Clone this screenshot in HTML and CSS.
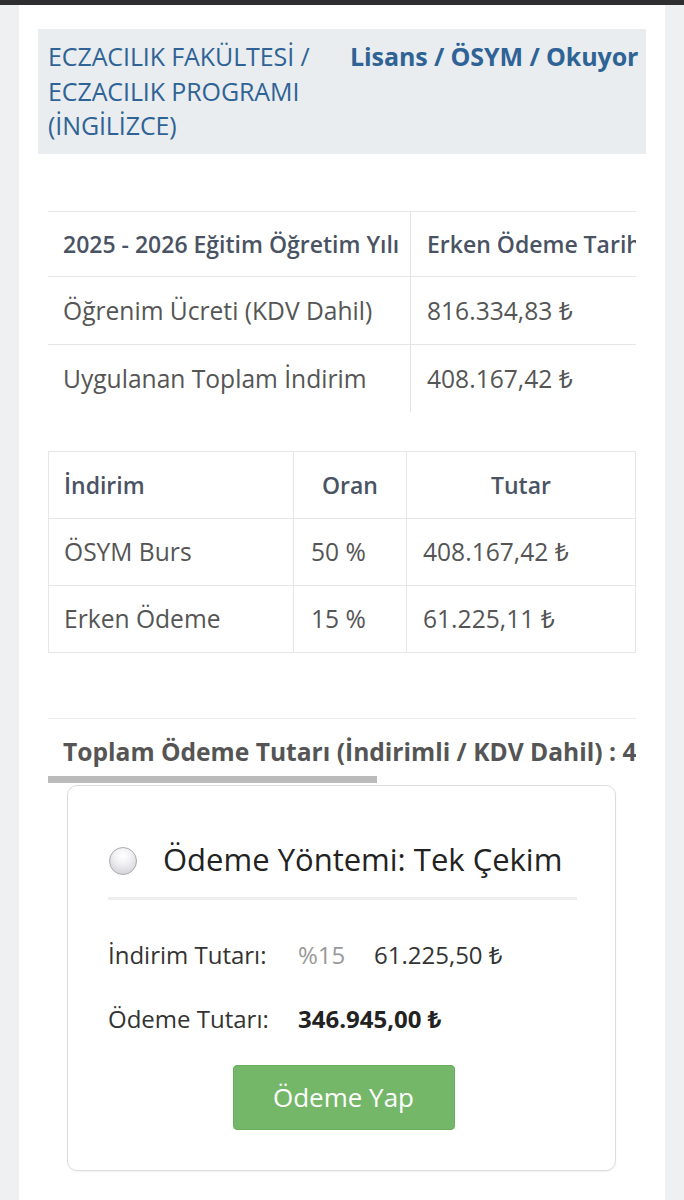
FILE: index.html
```html
<!DOCTYPE html>
<html lang="tr">
<head>
<meta charset="utf-8">
<link rel="stylesheet" href="styles.css">
</head>
<body>
<div class="topbar"></div>
<div class="panel">
  <div class="header">
    <div class="hdr-left">ECZACILIK FAKÜLTESİ / ECZACILIK PROGRAMI (İNGİLİZCE)</div>
    <div class="hdr-right">Lisans / ÖSYM / Okuyor</div>
  </div>

  <div class="section">
    <div class="clip">
      <table class="t1">
        <tr><th class="c1">2025 - 2026 Eğitim Öğretim Yılı</th><th class="c2">Erken Ödeme Tarihi</th></tr>
        <tr><td class="c1">Öğrenim Ücreti (KDV Dahil)</td><td class="c2">816.334,83 ₺</td></tr>
        <tr class="last"><td class="c1">Uygulanan Toplam İndirim</td><td class="c2">408.167,42 ₺</td></tr>
      </table>
    </div>

    <table class="t2">
      <tr><th class="d1">İndirim</th><th class="d2">Oran</th><th class="d3">Tutar</th></tr>
      <tr><td>ÖSYM Burs</td><td>50 %</td><td>408.167,42 ₺</td></tr>
      <tr><td>Erken Ödeme</td><td>15 %</td><td>61.225,11 ₺</td></tr>
    </table>

    <div class="total-wrap">
      <div class="total">Toplam Ödeme Tutarı (İndirimli / KDV Dahil) : 408.167,42 ₺</div>
      <div class="scrollbar"><div class="thumb"></div></div>
    </div>

    <div class="card">
      <div class="method">
        <span class="radio"></span>
        <span class="method-text">Ödeme Yöntemi: Tek Çekim</span>
      </div>
      <div class="sep"></div>
      <div class="row first">
        <span class="lbl">İndirim Tutarı:</span>
        <span class="pct">%15</span>
        <span class="val">61.225,50 ₺</span>
      </div>
      <div class="row second">
        <span class="lbl">Ödeme Tutarı:</span>
        <span class="val strong">346.945,00 ₺</span>
      </div>
      <div class="btn-row">
        <button class="btn">Ödeme Yap</button>
      </div>
    </div>
  </div>
</div>
</body>
</html>
```

FILE: styles.css
```css
html, body {
  margin: 0;
  padding: 0;
}
body {
  background: #eef0f2;
  font-family: "Open Sans", "Noto Sans", "DejaVu Sans", sans-serif;
  height: 1200px;
  overflow: hidden;
}
.topbar {
  height: 5px;
  background: #2e2e31;
}
.panel {
  margin: 0 19px;
  background: #fff;
  padding: 24px 19px 40px;
  min-height: 1200px;
}
.header {
  background: #e9edef;
  padding: 10px 10px 11px;
  display: grid;
  grid-template-columns: 290px 1fr;
  column-gap: 12px;
  color: #2f6396;
  font-size: 25px;
  line-height: 34.5px;
  letter-spacing: -0.1px;
}
.hdr-left {
  font-weight: 500;
}
.hdr-right {
  font-weight: 700;
  white-space: nowrap;
}
.section {
  padding: 57px 10px 0;
}
.clip {
  overflow: hidden;
  width: 588px;
}
table {
  border-collapse: collapse;
  font-size: 24.6px;
}
.t1 {
  width: 800px;
  table-layout: fixed;
}
.t1 th, .t1 td {
  text-align: left;
  padding: 0 15px;
  height: 67px;
  border-top: 1px solid #e6e6e6;
  white-space: nowrap;
  overflow: hidden;
}
.t1 th {
  font-weight: 600;
  font-size: 23px;
  color: #4a5364;
  height: 64px;
}
.t1 td {
  color: #555;
}
.t1 .c1 {
  width: 332px;
  border-right: 1px solid #e3e3e3;
}
.t1 .c2 {
  padding-left: 16px;
}
.t2 {
  width: 588px;
  margin-top: 39px;
  table-layout: fixed;
}
.t2 th, .t2 td {
  border: 1px solid #e6e6e6;
  height: 66px;
  padding: 0 15px;
  text-align: left;
  white-space: nowrap;
  overflow: hidden;
}
.t2 th {
  font-weight: 600;
  font-size: 23px;
  color: #4a5364;
}
.t2 td {
  color: #555;
}
.t2 .d1 { width: 214px; }
.t2 .d2 { width: 82px; text-align: center; }
.t2 .d3 { text-align: center; }
.t2 td:nth-child(2) { padding-left: 17px; }
.t2 td:nth-child(3) { padding-left: 16px; }
.total-wrap {
  margin-top: 65px;
  width: 588px;
  border-top: 1px solid #ececec;
  overflow: hidden;
}
.total {
  font-size: 24.6px;
  font-weight: 700;
  color: #555;
  white-space: nowrap;
  padding: 16px 15px 0;
  line-height: 34px;
}
.scrollbar {
  height: 7px;
  margin-top: 7px;
}
.thumb {
  width: 329px;
  height: 7px;
  background: #bbbbbb;
}
.card {
  margin: 2px 20px 0 19px;
  border: 1px solid #dcdcdc;
  border-radius: 10px;
  box-shadow: 0 1px 2px rgba(0,0,0,0.06);
  padding: 53px 38px 40px 40px;
  color: #333;
}
.method {
  display: flex;
  align-items: center;
  height: 40px;
}
.radio {
  width: 28px;
  height: 28px;
  border-radius: 50%;
  border: 1px solid #a9a9b0;
  background: radial-gradient(circle at 50% 30%, #ffffff 0%, #f2f2f5 35%, #c9c9d1 100%);
  margin-left: 1px;
  margin-right: 26px;
  margin-top: 4px;
  box-sizing: border-box;
  flex: none;
}
.method-text {
  font-size: 31px;
  color: #222;
  white-space: nowrap;
}
.sep {
  height: 3px;
  background: #eeeeee;
  margin-top: 18px;
}
.row {
  display: flex;
  align-items: center;
  font-size: 24px;
  height: 34px;
  color: #333;
  white-space: nowrap;
}
.row.first {
  margin-top: 38px;
}
.row.second {
  margin-top: 30px;
}
.lbl {
  width: 190px;
}
.pct {
  width: 76px;
  color: #999;
}
.val.strong {
  font-weight: 700;
  color: #222;
}
.btn-row {
  display: flex;
  justify-content: center;
  margin-top: 29px;
}
.btn {
  width: 222px;
  height: 65px;
  border: 1px solid #6aae5d;
  border-radius: 4px;
  background: #74b768;
  color: #fff;
  font-family: "Open Sans", "Noto Sans", "DejaVu Sans", sans-serif;
  font-size: 26px;
  margin-left: 2px;
}
```
